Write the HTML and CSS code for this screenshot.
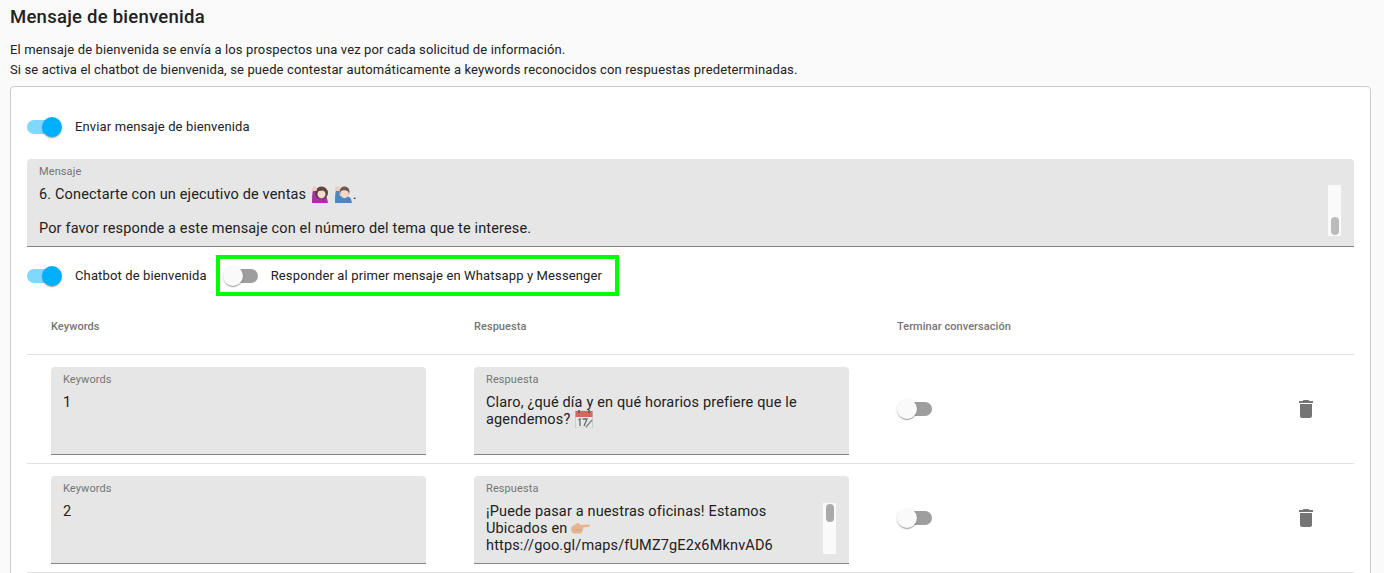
FILE: index.html
```html
<!DOCTYPE html>
<html lang="es">
<head>
<meta charset="utf-8">
<title>Mensaje de bienvenida</title>
<link rel="stylesheet" href="styles.css">
</head>
<body>
<main class="page">
  <h1 class="title">Mensaje de bienvenida</h1>
  <p class="intro">El mensaje de bienvenida se envía a los prospectos una vez por cada solicitud de información.<br>Si se activa el chatbot de bienvenida, se puede contestar automáticamente a keywords reconocidos con respuestas predeterminadas.</p>
  <section class="card">
    <div class="toggle-row first">
      <span class="switch on"><span class="thumb"></span></span>
      <span class="label">Enviar mensaje de bienvenida</span>
    </div>
    <div class="field message">
      <span class="field-label">Mensaje</span>
      <div class="field-text">6. Conectarte con un ejecutivo de ventas
        <svg class="emoji" viewBox="0 0 18 18"><path d="M1 18c0-5 0-9 1-13h3l1 5c4-1 9 0 10 3l1 5z" fill="#a92fa8"/><circle cx="10.500" cy="8" r="6.500" fill="#5c4540"/><path d="M5.500 18c0-3 1-4 2-4.500h6c1.500 1 2.500 2 2.500 4.500z" fill="#a92fa8"/><ellipse cx="10.500" cy="9" rx="4" ry="4.300" fill="#f4d9cd"/><path d="M5.500 5c2-.5 5-3 6.500-1 1.500 0 3 1 3.500 4l-3-2.500-5 .5z" fill="#5c4540"/><path d="M1 6c-.5-2 0-4 2-5 2 0 3 1 3 3l-.5 2z" fill="#f0cdbd"/></svg>
        <svg class="emoji" viewBox="0 0 18 18"><path d="M1 18c0-5 0-9 1-13h3l1 6c4-1 10 0 11 3l1 4z" fill="#4a86c0"/><circle cx="10.500" cy="6.500" r="5" fill="#6e5a52"/><ellipse cx="10.500" cy="8.500" rx="4.200" ry="4.700" fill="#f2d7c8"/><path d="M6.300 7c1-2 6-2.500 8.400 0l.3-3-4-2-4.500 2z" fill="#6e5a52"/><path d="M1 6c-.5-2 0-4 2-5 2 0 3 1 3 3l-.5 2z" fill="#f0cdbd"/></svg><span class="dot">.</span><br><br>Por favor responde a este mensaje con el número del tema que te interese.</div>
      <span class="scroll scroll-message"><span class="scroll-thumb"></span></span>
    </div>
    <div class="toggle-row second">
      <span class="switch on"><span class="thumb"></span></span>
      <span class="label">Chatbot de bienvenida</span>
      <div class="highlight">
        <span class="switch"><span class="thumb"></span></span>
        <span class="label">Responder al primer mensaje en Whatsapp y Messenger</span>
      </div>
    </div>
    <div class="grid head">
      <div class="cell">Keywords</div>
      <div class="cell">Respuesta</div>
      <div class="cell">Terminar conversación</div>
    </div>
    <div class="grid row">
      <div class="cell"><div class="field short"><span class="field-label">Keywords</span><div class="field-text">1</div></div></div>
      <div class="cell"><div class="field short"><span class="field-label">Respuesta</span><div class="field-text">Claro, ¿qué día y en qué horarios prefiere que le agendemos?
        <svg class="emoji" viewBox="0 0 18 18"><rect x="0.500" y="1" width="17" height="17" fill="#e9e9e9" stroke="#bbb" stroke-width=".6"/><rect x="0.500" y="1" width="17" height="6" fill="#d8665f"/><path d="M4 0v3M14 0v3" stroke="#555" stroke-width="1.500"/><path d="M3.500 10l1.500-1v7M7.500 9h4.500l-3 7" fill="none" stroke="#666" stroke-width="1.300"/><path d="M11 17l6-7" stroke="#888" stroke-width="1.600"/></svg></div></div></div>
      <div class="cell toggle-cell"><span class="switch"><span class="thumb"></span></span></div>
      <div class="cell icon-cell"><svg class="trash" viewBox="0 0 24 24"><path d="M6 19c0 1.100.9 2 2 2h8c1.100 0 2-.9 2-2V7H6v12zM19 4h-3.500l-1-1h-5l-1 1H5v2h14V4z"/></svg></div>
    </div>
    <div class="grid row">
      <div class="cell"><div class="field short"><span class="field-label">Keywords</span><div class="field-text">2</div></div></div>
      <div class="cell"><div class="field short"><span class="field-label">Respuesta</span><div class="field-text narrow">¡Puede pasar a nuestras oficinas! Estamos Ubicados en
        <svg class="emoji wide" viewBox="0 0 20 12"><path d="M1 6c1-2 4-4 7-5 1 0 2 1 2 2l9-.5c1.300 0 1.300 2 0 2.200l-6 .8c.5 3-1 6-3 6H5C2 11.500 1 9 1 6z" fill="#e3b68f"/><path d="M5 8h7" stroke="#c99a72" stroke-width=".6"/></svg><br>https://goo.gl/maps/fUMZ7gE2x6MknvAD6</div><span class="scroll scroll-answer"><span class="scroll-thumb"></span></span></div></div>
      <div class="cell toggle-cell"><span class="switch"><span class="thumb"></span></span></div>
      <div class="cell icon-cell"><svg class="trash" viewBox="0 0 24 24"><path d="M6 19c0 1.100.9 2 2 2h8c1.100 0 2-.9 2-2V7H6v12zM19 4h-3.500l-1-1h-5l-1 1H5v2h14V4z"/></svg></div>
    </div>
  </section>
</main>
</body>
</html>
```
FILE: styles.css
```css
html, body { margin: 0; height: 573px; overflow: hidden; }
body { background: #fafafa; color: #212121; font-family: Roboto, "Liberation Sans", sans-serif; }
.page { padding: 0 13px 0 10px; height: 573px; overflow: hidden; }
.title { margin: 0; padding-top: 6px; font-size: 18.500px; line-height: 22px; font-weight: 500; letter-spacing: 0.25px; }
.intro { margin: 12px 0 0; font-size: 13px; line-height: 20px; letter-spacing: 0.13px; }
.card { margin-top: 6px; padding: 0 16px; background: #fff; border: 1px solid #ccc; border-radius: 4px; height: 600px; box-sizing: border-box; }
.toggle-row { display: flex; align-items: center; }
.toggle-row.first { height: 40px; margin-top: 20px; margin-bottom: 12px; }
.toggle-row.second { height: 41px; margin-top: 8px; }
.label { margin-left: 14px; font-size: 13px; letter-spacing: 0.13px; line-height: 16px; }
.switch { position: relative; flex: none; display: block; width: 34px; height: 14px; border-radius: 7px; background: #9e9e9e; }
.switch.on { background: #80d8ff; }
.thumb { position: absolute; left: -1px; top: -3px; width: 20px; height: 20px; border-radius: 50%; background: #fafafa; box-shadow: 0 2px 1px -1px rgba(0,0,0,.2), 0 1px 1px rgba(0,0,0,.14), 0 1px 3px rgba(0,0,0,.12); }
.on .thumb { left: 15px; background: #00b0ff; }
.highlight { display: flex; align-items: center; box-sizing: border-box; width: 403px; height: 41px; margin-left: 9px; padding-left: 4px; border: 4px solid #00ff00; }
.highlight .label { margin-left: 13px; }
.field { position: relative; box-sizing: border-box; padding: 6px 12px 0; background: #e6e6e6; border-bottom: 1px solid #858585; border-radius: 4px 4px 0 0; height: 88px; }
.message { overflow: hidden; }
.field-label { display: block; font-size: 11px; line-height: 14px; color: #757575; letter-spacing: 0.1px; }
.field-text { margin-top: 7px; font-size: 14.500px; line-height: 17px; letter-spacing: 0.15px; }
.narrow { width: 320px; }
.emoji { display: inline-block; width: 18px; height: 18px; margin: -4px 0 -4px 1px; vertical-align: 0; }
.emoji.wide { width: 20px; height: 12px; margin: 0 0 0 -1px; vertical-align: -1px; }
.dot { margin-left: 1px; }
.scroll { position: absolute; display: block; box-sizing: border-box; width: 13px; height: 51px; background: #fafafa; }
.scroll-thumb { position: absolute; left: 3px; width: 8px; height: 18px; border-radius: 4px; background: #bbb; }
.scroll-message { top: 26px; right: 13px; }
.scroll-message .scroll-thumb { bottom: 1px; }
.scroll-answer { top: 27px; right: 13px; }
.scroll-answer .scroll-thumb { top: 1px; background: #aaa; }
.grid { display: grid; grid-template-columns: 423px 423px 1fr 96px; border-bottom: 1px solid #e0e0e0; box-sizing: border-box; }
.cell { padding: 0 24px; }
.head { height: 59px; padding-top: 24px; font-size: 11px; font-weight: 500; line-height: 14px; color: #757575; letter-spacing: 0.05px; }
.row { height: 109px; padding-top: 12px; }
.toggle-cell { display: flex; align-items: center; height: 84px; }
.toggle-cell .switch { margin-left: 1px; }
.icon-cell { display: flex; justify-content: center; align-items: center; height: 84px; padding: 0; }
.trash { width: 24px; height: 24px; fill: #757575; }
```
